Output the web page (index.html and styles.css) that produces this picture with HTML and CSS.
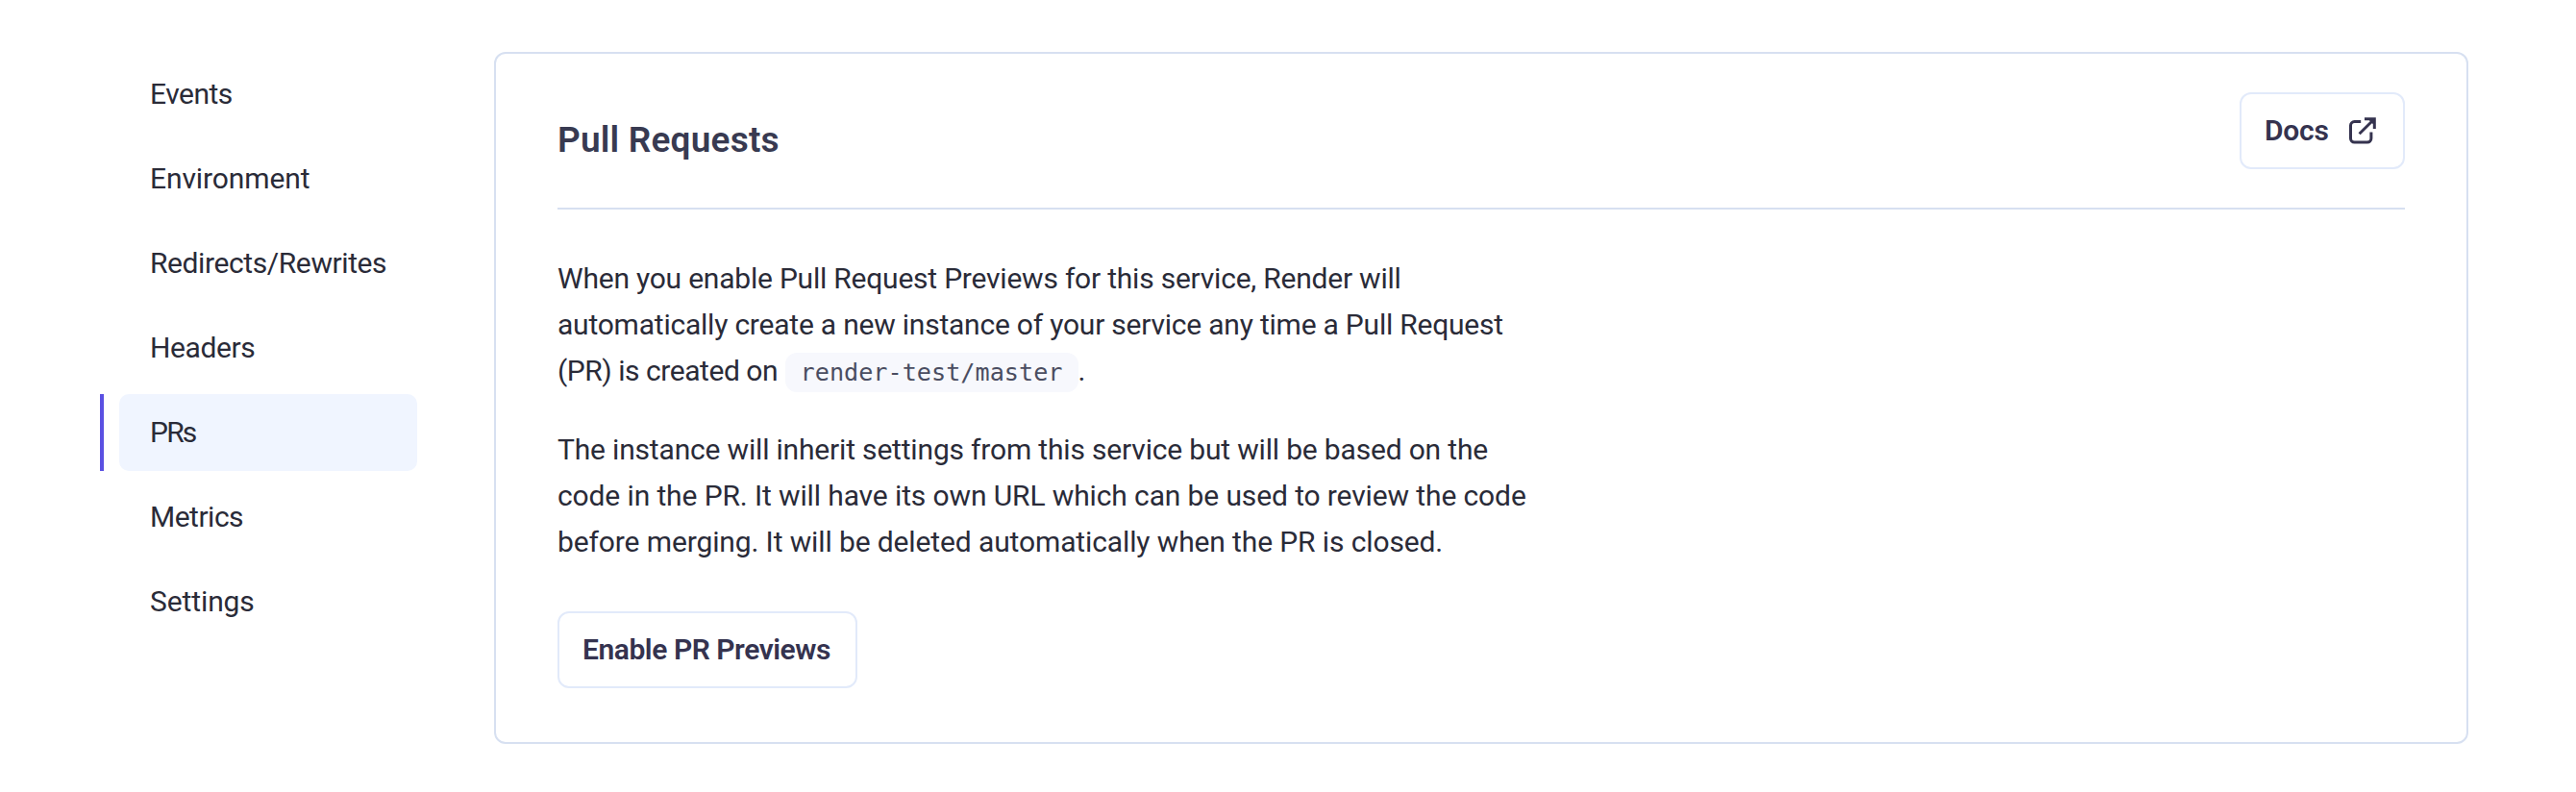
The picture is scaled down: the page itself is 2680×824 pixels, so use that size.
FILE: index.html
```
<!DOCTYPE html>
<html lang="en">
<head>
<meta charset="utf-8">
<title>Pull Requests</title>
<link rel="stylesheet" href="styles.css">
</head>
<body>
<div class="layout">
  <nav class="sidebar">
    <a class="item events"><span class="label">Events</span></a>
    <a class="item environment"><span class="label">Environment</span></a>
    <a class="item redirects"><span class="label">Redirects/Rewrites</span></a>
    <a class="item headers"><span class="label">Headers</span></a>
    <a class="item active"><span class="label">PRs</span></a>
    <a class="item metrics"><span class="label">Metrics</span></a>
    <a class="item settings"><span class="label">Settings</span></a>
  </nav>
  <main class="card">
    <header class="card-header">
      <h2 class="title">Pull Requests</h2>
      <button class="button docs">Docs
        <svg class="icon" viewBox="0 0 28 28" fill="none" stroke="currentColor" stroke-width="3">
          <path d="M12.2 4.6H5.5a4 4 0 0 0-4 4v13.4a4 4 0 0 0 4 4h13.4a4 4 0 0 0 4-4V15.6"/>
          <path d="M16 1.8h10.3V12M26 2 10.6 17.2"/>
          <path d="M19.5 1.8h6.8v6.8z" fill="currentColor" stroke="none"/>
        </svg>
      </button>
    </header>
    <p class="text">
      <span class="line tight">When you enable Pull Request Previews for this service, Render will</span>
      <span class="line tight">automatically create a new instance of your service any time a Pull Request</span>
      <span class="line"><span class="tighter">(PR) is created on</span> <code class="code">render-test/master</code>.</span>
    </p>
    <p class="text">
      <span class="line snug">The instance will inherit settings from this service but will be based on the</span>
      <span class="line loose">code in the PR. It will have its own URL which can be used to review the code</span>
      <span class="line loose">before merging. It will be deleted automatically when the PR is closed.</span>
    </p>
    <button class="button enable">Enable PR Previews</button>
  </main>
</div>
</body>
</html>
```
FILE: styles.css
```
* { box-sizing: border-box; }
body {
  margin: 0;
  background: #fff;
  color: #2a2b38;
  font: 400 30px/48px Roboto, "Liberation Sans", sans-serif;
}
.layout {
  display: flex;
  gap: 80px;
  height: 824px;
  padding: 54px 112px 50px 104px;
}
.sidebar {
  display: flex;
  flex-direction: column;
  gap: 8px;
  width: 330px;
  padding-top: 4px;
}
.item {
  display: flex;
  height: 80px;
  padding-left: 16px;
  border-left: 4px solid transparent;
}
.label {
  flex: 1;
  padding-left: 32px;
  border-radius: 10px;
  line-height: 80px;
  letter-spacing: -0.1px;
}
.active { border-left-color: #5a50e2; }
.active .label { background: #f0f5ff; letter-spacing: -1.8px; }
.events .label { letter-spacing: -0.5px; }
.redirects .label { letter-spacing: -0.4px; }
.headers .label { letter-spacing: -0.4px; }
.metrics .label { letter-spacing: -0.5px; }
.settings .label { letter-spacing: -0.1px; }
.card {
  flex: 1;
  padding: 40px 64px 0;
  border: 2px solid #d7e0f1;
  border-radius: 12px;
}
.card-header {
  display: flex;
  justify-content: space-between;
  align-items: flex-start;
  height: 122px;
  border-bottom: 2px solid #d7e0f1;
}
.title {
  margin: 28px 0 0;
  color: #383a51;
  font-size: 37px;
  line-height: 44px;
  font-weight: 600;
  letter-spacing: 0.2px;
}
.button {
  display: flex;
  align-items: center;
  justify-content: space-between;
  height: 80px;
  padding: 0 24px;
  background: #fff;
  border: 2px solid #e2eafa;
  border-radius: 12px;
  color: #35334f;
  font: 600 30px/48px Roboto, "Liberation Sans", sans-serif;
}
.docs { width: 172px; padding-right: 28px; letter-spacing: -0.2px; }
.icon { width: 28px; height: 28px; }
.enable {
  width: 312px;
  margin-top: 48px;
  letter-spacing: -0.45px;
  white-space: nowrap;
}
.text { margin: 48px 0 0; }
.text + .text { margin-top: 34px; }
.line { display: block; white-space: nowrap; }
.tight { letter-spacing: -0.22px; }
.tighter { letter-spacing: -0.46px; }
.snug { letter-spacing: -0.18px; }
.loose { letter-spacing: -0.12px; }
.code {
  padding: 6px 16px;
  border-radius: 12px;
  background: #f7f8fd;
  color: #4a4d61;
  font: 25.2px/1 "DejaVu Sans Mono", monospace;
}
```
